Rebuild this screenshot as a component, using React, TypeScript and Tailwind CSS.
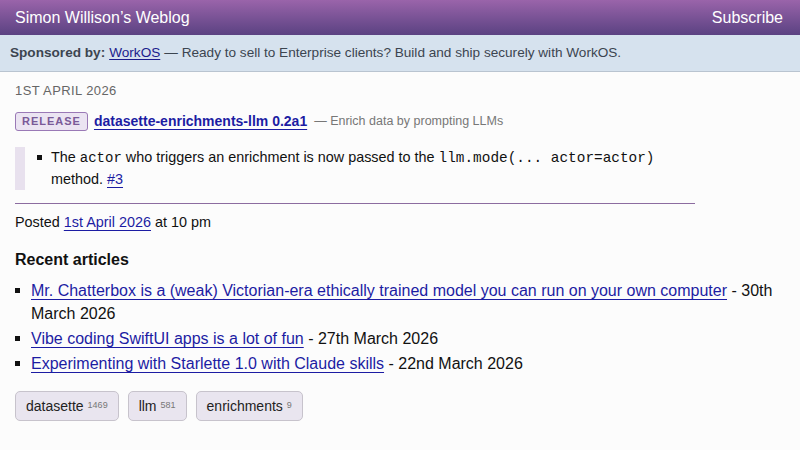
import React from "react";

const sans = { fontFamily: '"Liberation Sans", Arial, Helvetica, sans-serif' };
const mono = "font-['Liberation_Mono',monospace]";

export default function App() {
  const link = "text-[#1c1ca3] underline decoration-[#1c1ca3] underline-offset-[3px]";
  const items: [string, string][] = [
    ["Mr. Chatterbox is a (weak) Victorian-era ethically trained model you can run on your own computer", "30th March 2026"],
    ["Vibe coding SwiftUI apps is a lot of fun", "27th March 2026"],
    ["Experimenting with Starlette 1.0 with Claude skills", "22nd March 2026"],
  ];
  return (
    <div style={sans} className="min-h-[450px] bg-[#fcfcfc] text-[#111]">
      <header className="flex h-[35px] items-center justify-between bg-gradient-to-b from-[#9a64aa] to-[#5b4282] px-[15px] text-white">
        <span className="text-[16px]">Simon Willison’s Weblog</span>
        <span className="mr-[2px] text-[16px]">Subscribe</span>
      </header>
      <div className="flex h-[37px] items-center border-b border-[#b9c4d0] bg-[#d6e2ee] px-[10px] text-[13.6px] text-[#3c4550]">
        <span className="font-bold">Sponsored by:</span>
        <span className="ml-[4px] text-[#1c1c8c] underline underline-offset-[2px]">WorkOS</span>
        <span className="ml-[4px]">— Ready to sell to Enterprise clients? Build and ship securely with WorkOS.</span>
      </div>

      <main className="px-[15px]">
        <div className="mt-[9px] h-[20px] text-[13px] leading-[20px] uppercase tracking-[0.4px] text-[#666]">1st April 2026</div>

        <div className="mt-[10px] flex h-[20px] items-center">
          <span className="flex h-[19px] items-center rounded-[3px] border border-[#9a79b6] bg-[#ebe4f2] px-[6px] text-[11px] font-bold tracking-[1px] text-[#7a5a98]">
            RELEASE
          </span>
          <span className={`ml-[6px] text-[14px] font-bold ${link}`}>datasette-enrichments-llm 0.2a1</span>
          <span className="ml-[7px] text-[12.5px] text-[#777]">— Enrich data by prompting LLMs</span>
        </div>

        <div className="mt-[16px] flex">
          <div className="w-[10px] shrink-0 bg-[#e8e1ee]" />
          <ul className="pl-[12px]">
            <li className="flex text-[14.4px] leading-[21px]">
              <span className="mt-[8px] mr-[9px] h-[5px] w-[5px] shrink-0 bg-[#111]" />
              <span>
                The <code className={`${mono} text-[14px] leading-[21px]`}>actor</code> who triggers an enrichment is now passed to the{" "}
                <code className={`${mono} text-[14.4px] leading-[21px]`}>llm.mode(... actor=actor)</code>
                <br />
                method. <span className={link}>#3</span>
              </span>
            </li>
          </ul>
        </div>

        <hr className="mt-[13px] w-[680px] border-0 border-t border-[#8c6ca0]" />

        <p className="mt-[8px] text-[14.4px] leading-[21px]">
          Posted <span className={link}>1st April 2026</span> at 10 pm
        </p>

        <h3 className="mt-[15px] text-[16px] font-bold leading-[24px]">Recent articles</h3>

        <ul className="mt-[7px] text-[16px] leading-[23px]">
          {items.map(([t, d], i) => (
            <li key={t} className={`flex ${i > 0 ? "mt-[2px]" : ""}`}>
              <span className="mt-[9px] mr-[11px] h-[5px] w-[5px] shrink-0 bg-[#111]" />
              <span>
                <span className={link}>{t}</span> - {d}
              </span>
            </li>
          ))}
        </ul>

        <div className="mt-[16px] flex gap-[9px]">
          {[
            ["datasette", "1469"],
            ["llm", "581"],
            ["enrichments", "9"],
          ].map(([t, n]) => (
            <span
              key={t}
              className="flex h-[30px] items-center rounded-[5px] border border-[#c7c3cc] bg-[#e9e5ef] px-[10px] text-[14px] text-[#222]"
            >
              {t}
              <span className="ml-[4px] text-[9px] text-[#777]">{n}</span>
            </span>
          ))}
        </div>
      </main>
    </div>
  );
}
